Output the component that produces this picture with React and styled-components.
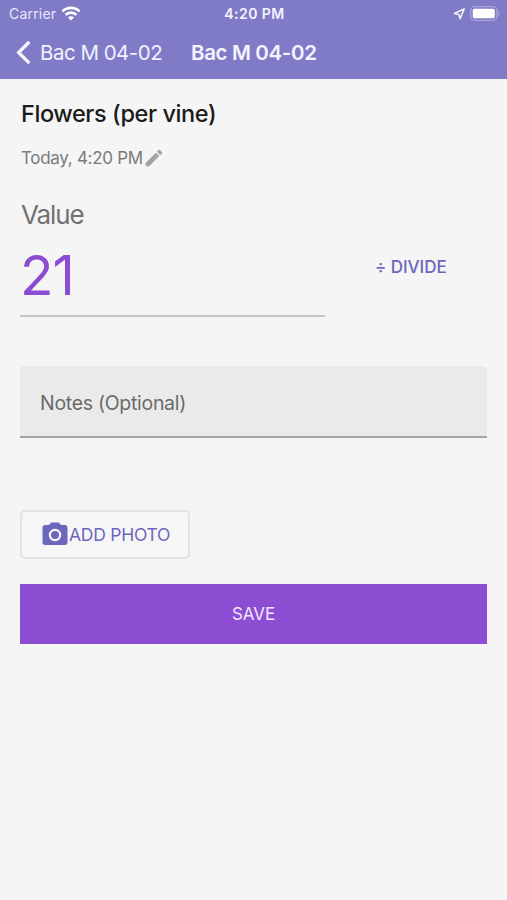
import React, { useState } from "react";
import styled, { createGlobalStyle } from "styled-components";

const GlobalStyle = createGlobalStyle`
    * {
        box-sizing: border-box;
    }

    body {
        margin: 0;
        background-color: #f5f5f5;
        font-family: Inter, "Liberation Sans", sans-serif;
    }

    button, input, textarea {
        font-family: inherit;
    }
`;

const Screen = styled.div`
    width: 507px;
    height: 900px;
    background-color: #f5f5f5;
    overflow: hidden;
`;

const Header = styled.header`
    height: 79px;
    background-color: #807bc6;
    color: #f4f3ff;
`;

const StatusBar = styled.div`
    display: grid;
    grid-template-columns: 1fr auto 1fr;
    align-items: center;
    height: 27px;
    padding: 0 7px 0 9px;
    font-size: 14px;
    line-height: 27px;
`;

const StatusSide = styled.div`
    display: flex;
    align-items: center;
    justify-content: ${(props) => (props.$end ? "flex-end" : "flex-start")};
    gap: 5px;
    color: #e9e8fb;
    letter-spacing: 0.2px;
`;

const Clock = styled.div`
    font-weight: 600;
    letter-spacing: 0.45px;
`;

const NavBar = styled.div`
    display: flex;
    align-items: center;
    height: 52px;
    padding: 0 0 1px 16px;
`;

const BackButton = styled.button`
    display: flex;
    align-items: center;
    gap: 9px;
    width: 175px;
    padding: 0;
    border: none;
    background-color: transparent;
    color: #f1f0ff;
    font-size: 20.5px;
    letter-spacing: -0.5px;
    white-space: nowrap;
`;

const NavTitle = styled.div`
    font-size: 20.5px;
    font-weight: 600;
    letter-spacing: -0.35px;
    white-space: nowrap;
`;

const Form = styled.main`
    display: flex;
    flex-direction: column;
    align-items: flex-start;
    padding: 20px 20px 0;
`;

const Title = styled.h1`
    margin: 0;
    padding-left: 1px;
    color: #1b1b1b;
    font-size: 23.5px;
    font-weight: 500;
    line-height: 30px;
    letter-spacing: -0.42px;
`;

const DateRow = styled.div`
    display: flex;
    align-items: center;
    margin-top: 17px;
    padding-left: 1px;
    color: #7b7b7b;
    font-size: 17px;
    line-height: 24px;
    letter-spacing: -0.3px;
`;

const Label = styled.label`
    margin-top: 29px;
    padding-left: 1px;
    color: #717171;
    font-size: 26px;
    line-height: 32px;
    letter-spacing: -1.1px;
`;

const ValueRow = styled.div`
    display: flex;
    align-items: flex-start;
    width: 100%;
    margin-top: 6px;
`;

const ValueInput = styled.input`
    width: 305px;
    height: 80px;
    padding: 0 0 3px;
    border: none;
    border-bottom: 2px solid #c6c6c6;
    border-radius: 0;
    outline: none;
    background-color: transparent;
    color: #8d4dd3;
    font-size: 55px;
    letter-spacing: -1px;
`;

const DivideButton = styled.button`
    margin-left: 50px;
    padding: 0;
    border: none;
    background-color: transparent;
    color: #6c66bd;
    font-size: 17px;
    font-weight: 500;
    line-height: 61px;
    letter-spacing: -0.05px;
`;

const Notes = styled.input`
    width: 467px;
    height: 72px;
    margin-top: 49px;
    padding: 3px 20px 0;
    border: none;
    border-bottom: 2px solid #a3a3a3;
    border-radius: 4px 4px 0 0;
    outline: none;
    background-color: #eaeaea;
    font-size: 19.5px;
    letter-spacing: -0.3px;

    &::placeholder {
        color: #6a6a6a;
        opacity: 1;
    }
`;

const PhotoButton = styled.button`
    display: flex;
    align-items: center;
    width: 170px;
    height: 49px;
    margin-top: 72px;
    padding: 0 0 0 18px;
    border: 2px solid #e3e3e3;
    border-radius: 5px;
    background-color: #f6f6f6;
    color: #6c66bd;
    font-size: 17.5px;
    letter-spacing: -0.25px;
    white-space: nowrap;

    svg {
        margin-right: -1px;
    }
`;

const SaveButton = styled.button`
    width: 467px;
    height: 60px;
    margin-top: 25px;
    padding: 0;
    border: none;
    background-color: #8d4dd3;
    color: #f3e4ff;
    font-size: 17px;
    letter-spacing: -0.1px;
`;

const WifiIcon = () => (
    <svg width="20" height="15" viewBox="0 0 20 15" fill="none" stroke="#ffffff" strokeWidth="2.7">
        <path d="M1.4 5.4a12.2 12.2 0 0 1 17.2 0" />
        <path d="M4.6 8.9a7.6 7.6 0 0 1 10.8 0" />
        <path d="M10 14.5 7 11.5a4.2 4.2 0 0 1 6 0z" fill="#ffffff" stroke="none" />
    </svg>
);

const LocationIcon = () => (
    <svg width="12" height="12" viewBox="0 0 12 12" fill="none" stroke="#f4f3ff" strokeWidth="1.5" strokeLinejoin="round">
        <path d="M11.2.9 1.4 5.5l4.5.9L7 10.8z" />
    </svg>
);

const BatteryIcon = () => (
    <svg width="30" height="15" viewBox="0 0 30 15">
        <rect x="0.7" y="0.7" width="26.2" height="13.6" rx="4" fill="none" stroke="#aaa6dc" strokeWidth="1.3" />
        <rect x="2.8" y="2.8" width="22" height="9.4" rx="1.6" fill="#ffffff" />
        <path d="M28.4 5.2v4.6c1.6-.6 1.6-4 0-4.6z" fill="#aaa6dc" />
    </svg>
);

const BackIcon = () => (
    <svg width="15" height="25" viewBox="0 0 15 25" fill="none" stroke="#f6f5ff" strokeWidth="3.3">
        <path d="M13.3 1.8 2.6 12.5l10.7 10.7" />
    </svg>
);

const PencilIcon = () => (
    <svg width="22" height="22" viewBox="0 0 24 24" fill="#a3a3a3">
        <path d="M3 17.25V21h3.75L17.81 9.94l-3.75-3.75L3 17.25zM20.71 7.04a1 1 0 0 0 0-1.41l-2.34-2.34a1 1 0 0 0-1.41 0l-1.83 1.83 3.75 3.75 1.83-1.83z" />
    </svg>
);

const CameraIcon = () => (
    <svg width="30" height="30" viewBox="0 0 24 24" fill="#6c66bd">
        <circle cx="12" cy="12" r="3.2" />
        <path d="M9 2 7.17 4H4c-1.1 0-2 .9-2 2v12c0 1.1.9 2 2 2h16c1.1 0 2-.9 2-2V6c0-1.1-.9-2-2-2h-3.17L15 2H9zm3 15a5 5 0 1 1 0-10 5 5 0 0 1 0 10z" />
    </svg>
);

function App() {
    const [value, setValue] = useState("21");
    const [notes, setNotes] = useState("");

    return (
        <Screen>
            <GlobalStyle />
            <Header>
                <StatusBar>
                    <StatusSide>Carrier <WifiIcon /></StatusSide>
                    <Clock>4:20 PM</Clock>
                    <StatusSide $end><LocationIcon /><BatteryIcon /></StatusSide>
                </StatusBar>
                <NavBar>
                    <BackButton><BackIcon />Bac M 04-02</BackButton>
                    <NavTitle>Bac M 04-02</NavTitle>
                </NavBar>
            </Header>
            <Form>
                <Title>Flowers (per vine)</Title>
                <DateRow>Today, 4:20 PM<PencilIcon /></DateRow>
                <Label htmlFor="value">Value</Label>
                <ValueRow>
                    <ValueInput id="value" value={value} onChange={(e) => setValue(e.target.value)} />
                    <DivideButton onClick={() => setValue(String(Number(value) / 2))}>÷ DIVIDE</DivideButton>
                </ValueRow>
                <Notes placeholder="Notes (Optional)" value={notes} onChange={(e) => setNotes(e.target.value)} />
                <PhotoButton><CameraIcon />ADD PHOTO</PhotoButton>
                <SaveButton>SAVE</SaveButton>
            </Form>
        </Screen>
    );
}

export default App;
